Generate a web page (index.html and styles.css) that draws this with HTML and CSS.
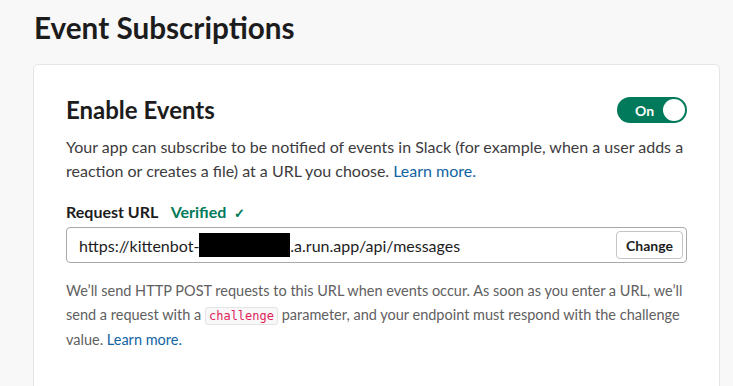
FILE: index.html
```html
<!DOCTYPE html>
<html lang="en">

<head>
    <meta charset="UTF-8">
    <meta name="viewport" content="width=device-width, initial-scale=1.0">
    <title>Event Subscriptions</title>
    <link rel="stylesheet" href="styles.css">
</head>

<body>
    <div class="page">
        <h1>Event Subscriptions</h1>

        <div class="card">
            <div class="card-head">
                <h2>Enable Events</h2>
                <button class="toggle" type="button">
                    <span class="toggle-label">On</span>
                    <span class="toggle-knob"></span>
                </button>
            </div>
            <p class="description">
                Your app can subscribe to be notified of events in Slack (for example, when a user adds a
                reaction or creates a file) at a URL you choose. <a href="#">Learn more.</a>
            </p>

            <div class="field">
                <div class="field-label">
                    Request URL
                    <span class="verified">Verified <span class="check">&#10003;</span></span>
                </div>
                <div class="url-box">
                    <span class="url-text">https://kittenbot-<span class="redacted"></span>.a.run.app/api/messages</span>
                    <button class="change-btn" type="button">Change</button>
                </div>
                <p class="hint">
                    We’ll send HTTP POST requests to this URL when events occur. As soon as you enter a URL, we’ll
                    send a request with a <code>challenge</code> parameter, and your endpoint must respond with the
                    challenge value. <a href="#">Learn more.</a>
                </p>
            </div>
        </div>
    </div>
</body>

</html>
```

FILE: styles.css
```css
body {
    margin: 0;
    font-family: Lato, "Liberation Sans", sans-serif;
    background: #f8f8f8;
    color: #1d1c1d;
}

.page {
    padding: 8px 13px 0 33px;
}

h1 {
    margin: 0 0 16px 1px;
    font-size: 29.7px;
    font-weight: 700;
    line-height: 40px;
    color: #1d1c1d;
}

.card {
    background: white;
    border: 1px solid #e6e6e6;
    border-radius: 5px;
    padding: 30px 32px 40px 32px;
    min-height: 300px;
}

.card-head {
    display: flex;
    align-items: center;
    justify-content: space-between;
    margin-bottom: 10px;
}

h2 {
    margin: 0;
    font-size: 24px;
    font-weight: 700;
    line-height: 30px;
}

.toggle {
    display: flex;
    align-items: center;
    justify-content: space-between;
    width: 70px;
    height: 26px;
    padding: 0 2px 0 18px;
    border: none;
    border-radius: 13px;
    background: #007a5a;
    cursor: pointer;
}

.toggle-label {
    font-family: Lato, sans-serif;
    font-size: 14px;
    font-weight: 700;
    color: white;
}

.toggle-knob {
    width: 22px;
    height: 22px;
    border-radius: 50%;
    background: white;
}

.description {
    margin: 0;
    font-size: 16px;
    line-height: 24px;
    color: #3d3b3d;
}

a {
    color: #1264a3;
    text-decoration: none;
}

.field {
    margin-top: 18px;
}

.field-label {
    font-size: 16px;
    font-weight: 700;
    line-height: 22px;
    margin-bottom: 3px;
}

.verified {
    margin-left: 9px;
    color: #007a5a;
}

.check {
    font-size: 13px;
    margin-left: 4px;
}

.url-box {
    display: flex;
    align-items: center;
    justify-content: space-between;
    height: 36px;
    box-sizing: border-box;
    border: 1px solid #a9a9a9;
    border-radius: 4px;
    padding: 0 3px 0 12px;
}

.url-text {
    display: flex;
    align-items: center;
    font-size: 16px;
    color: #1d1c1d;
}

.redacted {
    display: inline-block;
    width: 91px;
    height: 24px;
    background: black;
}

.change-btn {
    height: 28px;
    padding: 0 9px;
    font-family: Lato, sans-serif;
    font-size: 14px;
    font-weight: 700;
    color: #1d1c1d;
    background: white;
    border: 1px solid #c4c4c4;
    border-radius: 4px;
}

.hint {
    margin: 16px 0 0;
    font-size: 14.5px;
    line-height: 24px;
    color: #616061;
}

code {
    font-family: "DejaVu Sans Mono", monospace;
    font-size: 12px;
    color: #e01e5a;
    background: #f8f8f8;
    border: 1px solid #e4e4e4;
    border-radius: 3px;
    padding: 1px 3px;
}
```
